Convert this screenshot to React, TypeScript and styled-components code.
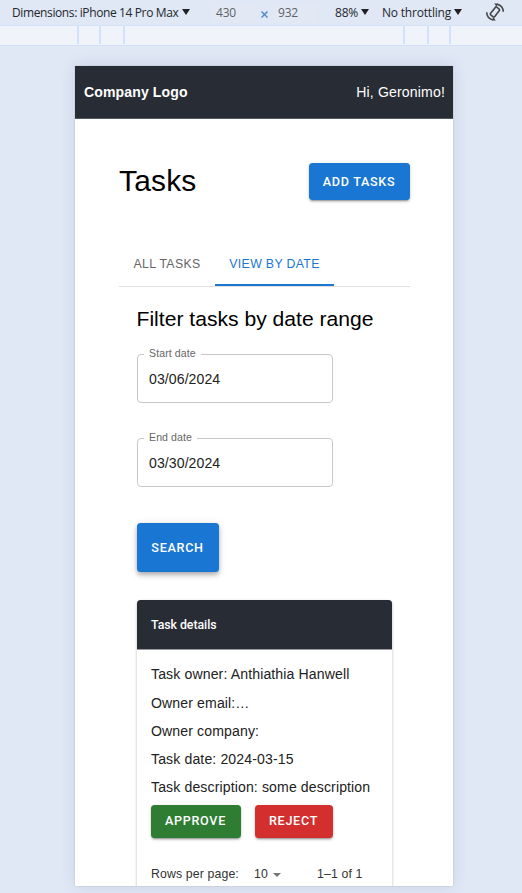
import React from "react";
import styled, { createGlobalStyle } from "styled-components";

const Global = createGlobalStyle`
  * { box-sizing: border-box; }
  html, body { margin: 0; }
  body { background: #e0e7f5; font-family: "Liberation Sans", Arial, sans-serif; }
`;

const Window = styled.div`
  width: 522px;
  height: 893px;
  overflow: hidden;
  background: #e0e7f5;
`;

const Toolbar = styled.div`
  height: 25px;
  display: flex;
  align-items: center;
  padding-left: 12px;
  font: 12px/25px "Open Sans", "Noto Sans", sans-serif;
  color: #24272b;
  white-space: nowrap;
`;

const ToolLabel = styled.span<{ $w: number; $ls?: number; $indent?: number }>`
  width: ${(p) => p.$w}px;
  padding-left: ${(p) => p.$indent ?? 0}px;
  letter-spacing: ${(p) => p.$ls ?? 0}px;
`;

const SizeBox = styled.span<{ $w: number }>`
  width: ${(p) => p.$w}px;
  height: 18px;
  border-radius: 4px;
  padding-left: 5px;
  background: #e3e9f4;
  color: #5d6269;
  line-height: 18px;
  letter-spacing: -0.2px;
`;

const Caret = styled.i<{ $gap: number }>`
  border: 4px solid transparent;
  border-top: 6px solid #202124;
  border-bottom: 0;
  margin: 0 ${(p) => p.$gap}px 2px 0;
`;

const Times = styled.svg`
  width: 7px;
  height: 7px;
  margin: 4px 5px 0 5px;
`;

const Ruler = styled.div`
  height: 21px;
  display: flex;
  background: #f0f3f9;
  border-top: 1px solid #d3e1fa;
  border-bottom: 1px solid #d3e1fa;
`;

const Tick = styled.i<{ $before: number }>`
  width: 2px;
  height: 18px;
  margin-left: ${(p) => p.$before}px;
  background: #d3e2fc;
`;

const Device = styled.div`
  width: 378px;
  height: 820px;
  margin: 20px 0 0 75px;
  overflow: hidden;
  background: #fff;
  box-shadow: 0 0 1px rgba(0, 0, 0, 0.25), 0 0 14px rgba(70, 90, 120, 0.14);
`;

const Header = styled.header`
  height: 53px;
  display: flex;
  justify-content: space-between;
  padding: 0 8px 0 9px;
  background: #282c34;
  border-bottom: 1px solid #55595f;
  color: #fff;
  font-size: 14.08px;
  line-height: 52px;
  letter-spacing: 0.15px;
`;

const Logo = styled.strong`
  letter-spacing: 0.1px;
`;
const Greeting = styled.span``;

const Page = styled.main`
  padding: 44px 43px 0 44px;
`;

const TitleRow = styled.div`
  display: flex;
  justify-content: space-between;
  align-items: flex-start;
`;

const Title = styled.h1`
  margin: 0;
  font-size: 29.92px;
  font-weight: 400;
  line-height: 36px;
  letter-spacing: 0.2px;
`;

const Button = styled.button<{ $bg: string; $w: number; $h: number; $raised?: boolean; $lift?: number }>`
  width: ${(p) => p.$w}px;
  height: ${(p) => p.$h}px;
  padding: 0 1px ${(p) => p.$lift ?? 0}px 0;
  border: 0;
  border-radius: 3.5px;
  background: ${(p) => p.$bg};
  color: #fff;
  font: 500 12.6px/20px Roboto, sans-serif;
  letter-spacing: 0.7px;
  box-shadow: ${(p) =>
    p.$raised
      ? "0 2px 4px -1px rgba(0,0,0,.2), 0 4px 5px rgba(0,0,0,.14), 0 1px 9px rgba(0,0,0,.12)"
      : "0 3px 1px -2px rgba(0,0,0,.2), 0 2px 2px rgba(0,0,0,.14), 0 1px 4px rgba(0,0,0,.12)"};
`;

const Tabs = styled.nav`
  height: 43px;
  margin-top: 44px;
  display: flex;
  border-bottom: 1px solid #e0e0e0;
`;

const Tab = styled.span<{ $w: number; $active?: boolean }>`
  width: ${(p) => p.$w}px;
  text-align: center;
  font-size: 12.32px;
  line-height: 40px;
  letter-spacing: 0.33px;
  color: ${(p) => (p.$active ? "#1976d2" : "#666")};
  border-bottom: ${(p) => (p.$active ? "2px solid #1976d2" : "0")};
`;

const Panel = styled.section`
  padding: 17px 17px 0 18px;
`;

const Subtitle = styled.h2`
  margin: 0 0 0 -0.5px;
  font-size: 21.12px;
  font-weight: 400;
  line-height: 30px;
  letter-spacing: 0;
  white-space: nowrap;
`;

const Field = styled.fieldset<{ $top: number }>`
  width: 196px;
  height: 56px;
  margin: ${(p) => p.$top}px 0 0;
  padding: 0 11px;
  border: 1px solid #c8c8c8;
  border-radius: 4px;
  min-width: 0;
  color: #222;
  font-size: 14.08px;
  line-height: 37px;
  letter-spacing: 0.08px;
`;

const Legend = styled.legend`
  margin-left: -5px;
  padding: 0 5px;
  color: #666;
  font-size: 10.56px;
  line-height: 14px;
  letter-spacing: 0.1px;
`;

const LegendText = styled.span`
  display: block;
  height: 14px;
  margin-top: -1px;
  margin-bottom: 1px;
`;

const FieldValue = styled.div``;

const SearchRow = styled.div`
  display: flex;
  margin: 36px 0 0;
`;

const Card = styled.section`
  width: 255px;
  height: 330px;
  margin-top: 28px;
  border-radius: 4px;
  box-shadow: 0 1px 3px rgba(0, 0, 0, 0.25), 0 1px 1px rgba(0, 0, 0, 0.12);
`;

const CardHead = styled.div`
  height: 50px;
  padding-left: 14px;
  border-radius: 3.5px 3.5px 0 0;
  background: #282c34;
  border-bottom: 1px solid #999ba0;
  color: #fff;
  font: 500 12.32px/50px Roboto, sans-serif;
  letter-spacing: -0.04px;
`;

const CardBody = styled.div`
  padding: 10px 0 0 14px;
`;

const Detail = styled.div<{ $h?: number }>`
  height: ${(p) => p.$h ?? 28}px;
  font-size: 14.08px;
  line-height: 28px;
  letter-spacing: 0.12px;
  color: #222;
  white-space: nowrap;
`;

const Actions = styled.div`
  display: flex;
  gap: 14px;
  margin-top: 4px;
`;

const Pagination = styled.div`
  display: flex;
  align-items: center;
  margin-top: 26px;
  font-size: 12.32px;
  line-height: 20px;
  letter-spacing: 0.12px;
  color: #333;
`;

const PageCell = styled.span<{ $w: number }>`
  width: ${(p) => p.$w}px;
  white-space: nowrap;
`;

const SelectArrow = styled.i`
  border: 4.5px solid transparent;
  border-top: 4.5px solid #757575;
  border-bottom: 0;
  margin: 2px 36px 0 0;
`;

const RotateSvg = styled.svg`
  width: 20px;
  height: 20px;
  flex: none;
  margin-bottom: 1px;
`;

const RotateIcon = () => (
  <RotateSvg viewBox="0 0 20 20" fill="none" stroke="#44474c" strokeWidth="1.6">
    <rect x="7.4" y="5.2" width="5.2" height="9.8" rx="1" transform="rotate(38 10 10)" />
    <path d="M12 2.2c3.6.8 6.2 3.7 6.3 7.6" />
    <path d="M8 17.8C4.4 17 1.8 14.1 1.7 10.2" />
    <path d="M9.2 1.4h4.2l-2 3.2zM10.8 18.6H6.6l2-3.2z" fill="#44474c" stroke="none" />
  </RotateSvg>
);

const details = ["Owner email:…", "Owner company:", "Task date: 2024-03-15", "Task description: some description"];

export default function App() {
  return (
    <Window>
      <Global />
      <Toolbar>
        <ToolLabel $w={170} $ls={-0.38}>Dimensions: iPhone 14 Pro Max</ToolLabel>
        <Caret $gap={21} />
        <SizeBox $w={45}>430</SizeBox>
        <Times viewBox="0 0 7 7" stroke="#4d87c7" strokeWidth="1.4">
          <path d="M.5.5l6 6M6.5.5l-6 6" />
        </Times>
        <SizeBox $w={45}>932</SizeBox>
        <ToolLabel $w={43} $ls={-0.2} $indent={17}>88%</ToolLabel>
        <Caret $gap={13} />
        <ToolLabel $w={72} $ls={-0.2}>No throttling</ToolLabel>
        <Caret $gap={23} />
        <RotateIcon />
      </Toolbar>
      <Ruler>
        <Tick $before={77} />
        <Tick $before={20} />
        <Tick $before={22} />
        <Tick $before={278} />
        <Tick $before={22} />
        <Tick $before={20} />
      </Ruler>
      <Device>
        <Header>
          <Logo>Company Logo</Logo>
          <Greeting>Hi, Geronimo!</Greeting>
        </Header>
        <Page>
          <TitleRow>
            <Title>Tasks</Title>
            <Button $bg="#1976d2" $w={101} $h={37}>ADD TASKS</Button>
          </TitleRow>
          <Tabs>
            <Tab $w={96}>ALL TASKS</Tab>
            <Tab $w={119} $active>VIEW BY DATE</Tab>
          </Tabs>
          <Panel>
            <Subtitle>Filter tasks by date range</Subtitle>
            <Field $top={13}>
              <Legend><LegendText>Start date</LegendText></Legend>
              <FieldValue>03/06/2024</FieldValue>
            </Field>
            <Field $top={28}>
              <Legend><LegendText>End date</LegendText></Legend>
              <FieldValue>03/30/2024</FieldValue>
            </Field>
            <SearchRow>
              <Button $bg="#1976d2" $w={82} $h={49} $raised>SEARCH</Button>
            </SearchRow>
            <Card>
              <CardHead>Task details</CardHead>
              <CardBody>
                <Detail $h={29}>Task owner: Anthiathia Hanwell</Detail>
                {details.map((line) => (
                  <Detail key={line}>{line}</Detail>
                ))}
                <Actions>
                  <Button $bg="#2e7d32" $w={90} $h={33} $lift={2}>APPROVE</Button>
                  <Button $bg="#d32f2f" $w={78} $h={33} $lift={2}>REJECT</Button>
                </Actions>
                <Pagination>
                  <PageCell $w={103}>Rows per page:</PageCell>
                  <PageCell $w={19}>10</PageCell>
                  <SelectArrow />
                  <PageCell $w={50}>1–1 of 1</PageCell>
                </Pagination>
              </CardBody>
            </Card>
          </Panel>
        </Page>
      </Device>
    </Window>
  );
}
